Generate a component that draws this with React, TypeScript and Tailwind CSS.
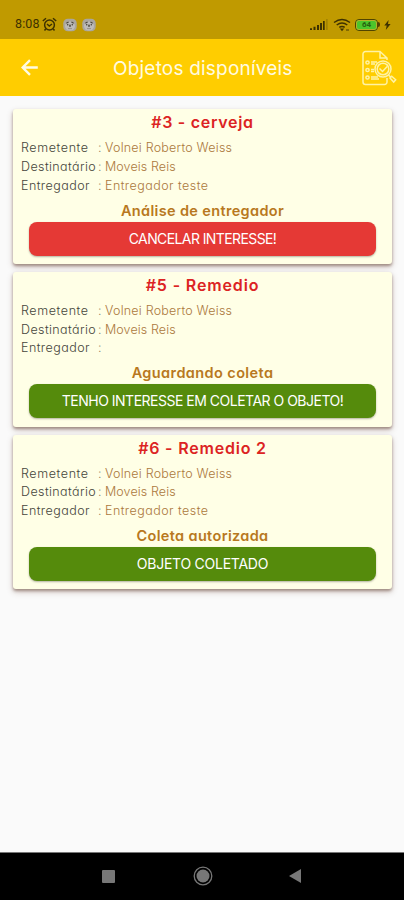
import React from "react";

type Item = {
  title: string;
  titleClass: string;
  courier: string;
  status: string;
  statusClass: string;
  action: string;
  actionClass: string;
};

const items: Item[] = [
  {
    title: "#3 - cerveja",
    titleClass: "tracking-[0.7px]",
    courier: "Entregador teste",
    status: "Análise de entregador",
    statusClass: "tracking-[0.35px]",
    action: "CANCELAR INTERESSE!",
    actionClass: "bg-[#e53935] tracking-[-0.6px]",
  },
  {
    title: "#5 - Remedio",
    titleClass: "tracking-[0.85px]",
    courier: "",
    status: "Aguardando coleta",
    statusClass: "tracking-[0.4px]",
    action: "TENHO INTERESSE EM COLETAR O OBJETO!",
    actionClass: "bg-[#558b0c] tracking-[-0.5px]",
  },
  {
    title: "#6 - Remedio 2",
    titleClass: "tracking-[0.8px]",
    courier: "Entregador teste",
    status: "Coleta autorizada",
    statusClass: "tracking-[0.35px]",
    action: "OBJETO COLETADO",
    actionClass: "bg-[#558b0c] tracking-[-0.25px]",
  },
];

function Row({ label, labelClass, value, valueClass }: { label: string; labelClass: string; value: string; valueClass: string }) {
  return (
    <div className="flex h-[18.6px] items-center whitespace-nowrap text-[12.5px] font-light leading-none">
      <span className={`w-[77px] text-[#45453b] ${labelClass}`}>{label}</span>
      <span className="w-[7px] text-[#75684c]">:</span>
      <span className={`text-[#ab783c] ${valueClass}`}>{value}</span>
    </div>
  );
}

function Card({ item }: { item: Item }) {
  return (
    <section className="h-[154.5px] rounded-[3px] bg-[#ffffe6] shadow-[0_2px_3px_rgba(75,35,20,0.4),0_3px_6px_rgba(90,50,30,0.25)]">
      <h2 className={`h-[26px] text-center text-[16px] font-semibold leading-[26px] text-[#dc2323] ${item.titleClass}`}>{item.title}</h2>
      <div className="pl-2 pt-[4px]">
        <Row label="Remetente" labelClass="tracking-[0.6px]" value="Volnei Roberto Weiss" valueClass="tracking-[0.22px]" />
        <Row label="Destinatário" labelClass="tracking-[0.4px]" value="Moveis Reis" valueClass="tracking-[0.1px]" />
        <Row label="Entregador" labelClass="tracking-[0.45px]" value={item.courier} valueClass="tracking-[0.45px]" />
      </div>
      <p className={`mt-[5.6px] h-[21px] text-center text-[14.5px] font-semibold leading-5 text-[#b87820] ${item.statusClass}`}>{item.status}</p>
      <button className={`mx-auto block h-[34px] w-[347px] whitespace-nowrap rounded-[8px] text-center text-[14px] leading-[34px] text-white shadow-[0_1px_2px_rgba(0,0,0,0.3)] ${item.actionClass}`}>
        {item.action}
      </button>
    </section>
  );
}

function Koala() {
  return (
    <svg width="14" height="14" viewBox="0 0 14 14">
      <rect x="0.3" y="0.8" width="13.4" height="12.4" rx="4.5" fill="#aaa69e" />
      <ellipse cx="7" cy="8" rx="5" ry="4.6" fill="#bdbbb9" />
      <path d="M3.3 5.2 5.6 4M8.4 4l2.3 1.2" stroke="#4b473d" strokeWidth="1.2" />
      <circle cx="4.7" cy="6.7" r=".8" fill="#464237" />
      <circle cx="9.3" cy="6.7" r=".8" fill="#464237" />
      <ellipse cx="7" cy="7.7" rx="1" ry="1.3" fill="#5b574d" />
      <path d="M5 10.6h4" stroke="#8a867d" strokeWidth=".8" />
    </svg>
  );
}

function StatusBar() {
  return (
    <div className="flex h-[39px] items-center justify-between bg-[#c09a00] pl-[15px] pr-[13px] pt-[10px] text-[#3d3100]">
      <div className="flex items-center">
        <span className="w-[27px] font-[Roboto] text-[12.5px] leading-none tracking-[0.1px]">8:08</span>
        <svg width="15" height="15" viewBox="0 0 15 15" fill="none" stroke="currentColor" strokeWidth="1.5">
          <circle cx="7.5" cy="8" r="4.9" />
          <path d="M.8 4 4 1.3M14.2 4 11 1.3M3.7 12l-1.2 1.5M11.3 12l1.2 1.5M5 7l2.3 2L10 7" />
        </svg>
        <div className="ml-[6px] flex gap-[5px]"><Koala /><Koala /></div>
      </div>
      <div className="flex items-center">
        <svg width="18" height="12" viewBox="0 0 18 12" fill="currentColor">
          <path d="M0 9.3h2V11H0zM3.5 7.8h2V11h-2zM7 6h2v5H7zM10 4h2v7h-2z" />
          <path d="M13 2h1.7v9H13z" />
          <path d="M16.3 0h1.2v11h-1.2z" opacity=".3" />
        </svg>
        <svg className="ml-[5px]" width="18" height="14" viewBox="0 0 18 14" fill="none" stroke="currentColor" strokeWidth="1.5">
          <path d="M1 4.5Q9-1.5 17 4.5M3.7 7Q9 3 14.3 7M6.3 9.4q2.7-1.8 5.4 0" />
          <path d="m6.8 10.5 2.2 2.7 2.2-2.7z" fill="currentColor" stroke="none" />
          <path d="M13 12h3" opacity=".6" />
        </svg>
        <div className="ml-[4px] flex h-[12px] w-[23px] items-center justify-center rounded-[4px] border-[1.5px] border-[#514400] bg-[#4cc62c] font-[Roboto] text-[8px] font-bold leading-none text-[#27610f] outline-[1px] -outline-offset-2 outline-[#b3b329]">64</div>
        <span className="h-[5px] w-[2px] rounded-r bg-[#514400]" />
        <svg className="ml-[4px]" width="7" height="10" viewBox="0 0 7 10" fill="currentColor"><path d="M4.6 0 .3 5.5h2.4L1.8 10l4.8-6H4z" /></svg>
      </div>
    </div>
  );
}

function Header() {
  return (
    <header className="flex h-[57px] items-center bg-[#ffcd00] text-[#fffbe2]">
      <svg className="ml-[21px]" width="18" height="17" viewBox="0 0 18 17" fill="none" stroke="currentColor" strokeWidth="2.4">
        <path d="M16.8 8.5H2M9 1.2 1.7 8.5 9 15.8" />
      </svg>
      <h1 className="ml-[74px] w-[248px] whitespace-nowrap pt-px text-[19px] leading-none tracking-[0.2px]">Objetos disponíveis</h1>
      <svg width="36" height="36" viewBox="0 0 36 36" fill="none" stroke="#fff3a5" strokeWidth="1.5">
        <path d="M26 10V8l-7-6.5H4.5A2.5 2.5 0 0 0 2 4v28a2.5 2.5 0 0 0 2.5 2.5h19A2.5 2.5 0 0 0 26 32v-4M19 1.5V8h7" />
        <circle cx="6.5" cy="12.5" r="1.6" /><circle cx="6.5" cy="20" r="1.6" /><circle cx="6.5" cy="27.5" r="1.6" />
        <path d="M10 12h6M10 14h4M10 19.5h3M10 21.5h3M10 27h7M10 29h8" />
        <circle cx="22" cy="19" r="8" />
        <circle cx="22" cy="19" r="5.8" />
        <path d="m18.5 18.5 3 3 4.7-5M27.5 25l2 2M29 28l1.7-1.8 4 3.6-2 2.3z" />
      </svg>
    </header>
  );
}

export default function App() {
  return (
    <main className="flex h-[900px] w-[404px] flex-col bg-[#fafafa] font-[Inter,sans-serif] [font-feature-settings:'cv11']">
      <StatusBar />
      <Header />
      <div className="flex flex-1 flex-col gap-[8.2px] pl-[13px] pr-[12px] pt-[13.4px]">
        {items.map((item) => <Card key={item.title} item={item} />)}
      </div>
      <nav className="flex h-[48px] items-center border-t border-[#777] bg-black pb-px text-[#777]">
        <span className="ml-[102px] size-[13px] rounded-[1px] bg-[#777]" />
        <svg className="ml-[78px]" width="20" height="20" viewBox="0 0 20 20">
          <circle cx="10" cy="10" r="8.8" fill="none" stroke="currentColor" strokeWidth="1.3" />
          <circle cx="10" cy="10" r="6.5" fill="currentColor" />
        </svg>
        <svg className="ml-[76px]" width="12" height="14" viewBox="0 0 12 14"><path d="M12 0v14L0 7z" fill="currentColor" /></svg>
      </nav>
    </main>
  );
}
